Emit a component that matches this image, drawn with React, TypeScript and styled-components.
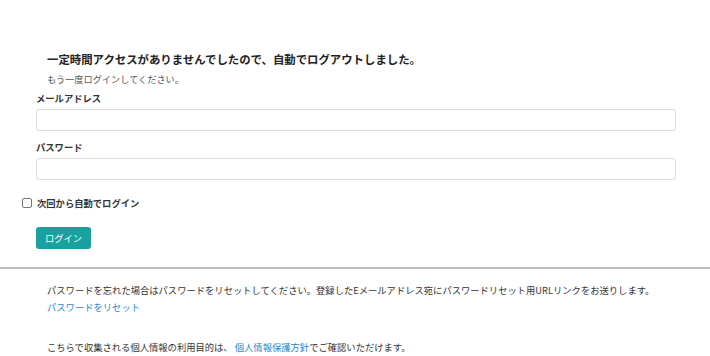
import React from "react";
import styled, { createGlobalStyle } from "styled-components";

const textColor = "#333";
const baseSize = 9.3;

const GlobalStyle = createGlobalStyle`
  body {
    margin: 0;
    background: #fff;
    color: ${textColor};
    font-family: "Noto Sans CJK JP", "Noto Sans", "Liberation Sans", sans-serif;
  }
`;

const Page = styled.div`
  width: 710px;
  height: 356px;
  overflow: hidden;
`;

const Main = styled.form`
  width: 640px;
  padding: 51px 0 0 36px;
  display: flex;
  flex-direction: column;
`;

const Notice = styled.div`
  padding-left: 11px;
`;

const Heading = styled.h1`
  margin: 0;
  font-size: 11.4px;
  line-height: 16px;
  font-weight: 700;
  color: #222;
`;

const SubText = styled.p`
  margin: 5px 0 0;
  font-size: 9.2px;
  line-height: 14px;
  color: #555;
`;

const Label = styled.label<{ gap: number }>`
  display: block;
  margin-top: ${({ gap }) => gap}px;
  font-size: ${baseSize}px;
  line-height: 14px;
  font-weight: 700;
`;

const Input = styled.input`
  box-sizing: border-box;
  width: 640px;
  height: 22px;
  margin-top: 4px;
  border: 1px solid #dcdcdc;
  border-radius: 3px;
  background: #fff;
  outline: none;
`;

const CheckRow = styled.label`
  display: flex;
  align-items: center;
  gap: 5px;
  margin: 16px 0 0 -14px;
  font-size: ${baseSize}px;
  line-height: 14px;
  font-weight: 700;
`;

const CheckBox = styled.input`
  appearance: none;
  margin: 0;
  width: 10px;
  height: 10px;
  border: 1px solid #767676;
  border-radius: 2px;
  background: #fff;
`;

const Button = styled.button`
  align-self: flex-start;
  margin-top: 17px;
  width: 55px;
  height: 22px;
  padding: 0;
  border: none;
  border-radius: 3px;
  background: #17a2a0;
  color: #fff;
  font-family: inherit;
  font-size: ${baseSize}px;
`;

const Divider = styled.hr`
  margin: 18px 0 0;
  border: none;
  height: 2px;
  background: #bdbdbd;
`;

const Footer = styled.div`
  padding: 14px 0 0 47px;
  font-size: ${baseSize}px;
  line-height: 14px;
  color: ${textColor};
`;

const Para = styled.p<{ gap: number }>`
  margin: ${({ gap }) => gap}px 0 0;
`;

const Link = styled.a`
  color: #2d86cf;
  text-decoration: none;
`;

export default function App() {
  return (
    <Page>
      <GlobalStyle />
      <Main onSubmit={(e) => e.preventDefault()}>
        <Notice>
          <Heading>
            一定時間アクセスがありませんでしたので、自動でログアウトしました。
          </Heading>
          <SubText>もう一度ログインしてください。</SubText>
        </Notice>
        <Label gap={5}>メールアドレス</Label>
        <Input type="email" />
        <Label gap={9}>パスワード</Label>
        <Input type="password" />
        <CheckRow>
          <CheckBox type="checkbox" />
          次回から自動でログイン
        </CheckRow>
        <Button type="submit">ログイン</Button>
      </Main>
      <Divider />
      <Footer>
        <Para gap={0}>
          パスワードを忘れた場合はパスワードをリセットしてください。登録したEメールアドレス宛にパスワードリセット用URLリンクをお送りします。
        </Para>
        <Para gap={3}>
          <Link href="#">パスワードをリセット</Link>
        </Para>
        <Para gap={26}>
          こちらで収集される個人情報の利用目的は、 <Link href="#">個人情報保護方針</Link>
          でご確認いただけます。
        </Para>
      </Footer>
    </Page>
  );
}
